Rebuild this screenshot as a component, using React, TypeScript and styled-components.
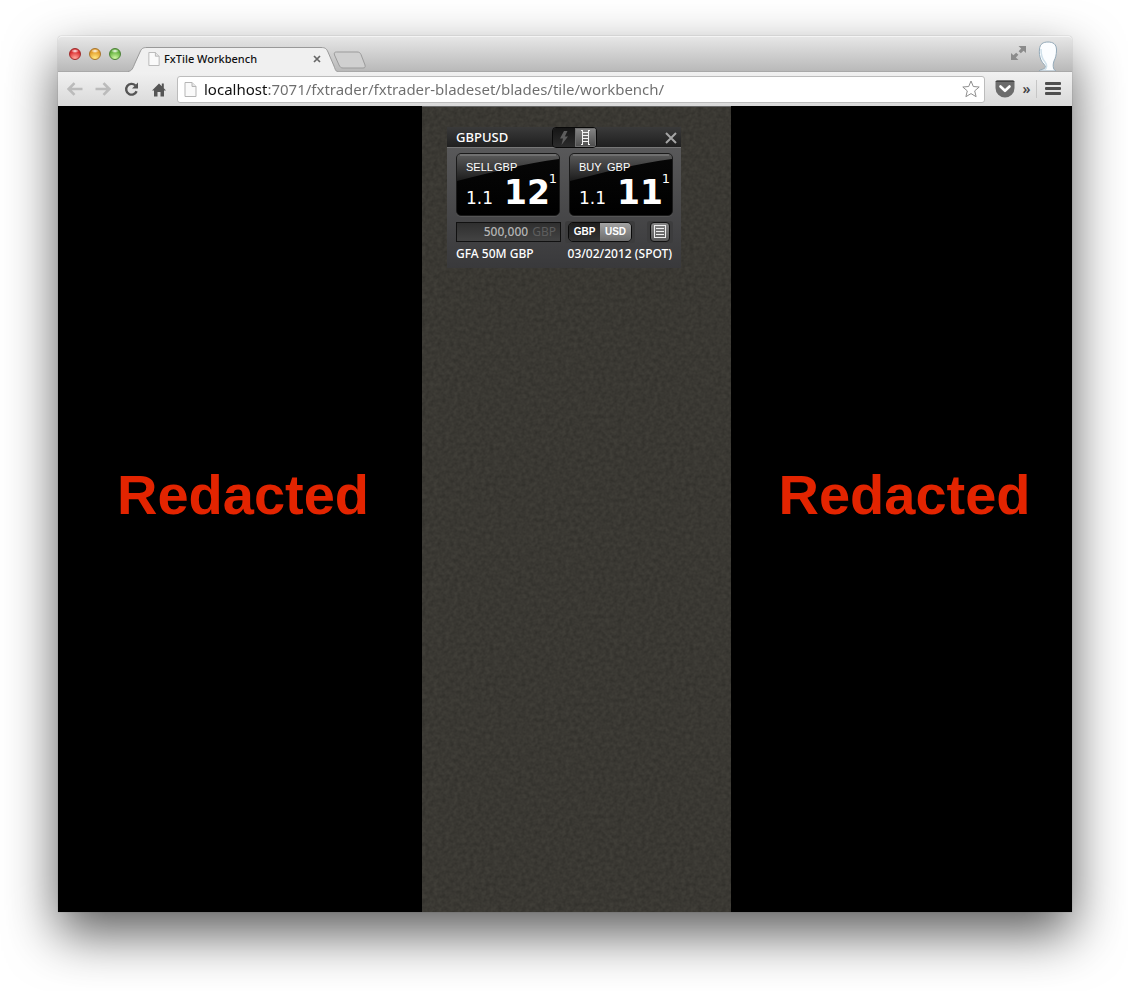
import React, { useState } from "react";
import styled, { createGlobalStyle } from "styled-components";

const uiFont = `"Noto Sans", "Open Sans", sans-serif`;
const wideFont = `"DejaVu Sans", Verdana, sans-serif`;
const plainFont = `"Liberation Sans", Arial, sans-serif`;

const grain =
  "<svg xmlns='http://www.w3.org/2000/svg' width='200' height='200'><filter id='n' x='0' y='0' width='100%' height='100%'><feTurbulence type='fractalNoise' baseFrequency='0.25' numOctaves='3' stitchTiles='stitch'/><feColorMatrix values='0 0 0 0 0 0 0 0 0 0 0 0 0 0 0 0.35 0 0 0 -0.08'/></filter><rect width='200' height='200' filter='url(#n)'/></svg>";

const GlobalStyle = createGlobalStyle`
  *, *::before, *::after { box-sizing: border-box; }
  body { margin: 0; background: #fff; font-family: ${uiFont}; }
  button, input { font: inherit; margin: 0; padding: 0; border: 0; background: none; color: inherit; }
  button { cursor: pointer; }
  svg { display: block; }
`;

const Desktop = styled.div`
  min-height: 100vh;
  padding: 36px 56px 79px 58px;
  display: flex;
  overflow: hidden;
`;

const Window = styled.div`
  flex: 1;
  min-width: 0;
  display: flex;
  flex-direction: column;
  border-radius: 4px 4px 0 0;
  box-shadow: 0 22px 52px rgba(0, 0, 0, 0.64), 0 0 1px rgba(0, 0, 0, 0.5);
`;

const TabStrip = styled.header`
  height: 36px;
  display: flex;
  align-items: flex-end;
  border-radius: 4px 4px 0 0;
  border-top: 1px solid #f4f4f4;
  border-bottom: 1px solid #a9a9a9;
  background: linear-gradient(#e6e6e6, #b9b9b9);
`;

const Lights = styled.div`
  display: flex;
  gap: 8px;
  padding: 0 4px 11px 11px;
`;

const Light = styled.button<{ $top: string; $low: string; $edge: string }>`
  width: 12px;
  height: 12px;
  border-radius: 50%;
  border: 1px solid ${(p) => p.$edge};
  background: radial-gradient(ellipse 4px 2px at 50% 20%, #fff, transparent),
    radial-gradient(circle at 50% 95%, ${(p) => p.$low} 10%, ${(p) => p.$top} 70%);
`;

const Tab = styled.div`
  position: relative;
  width: 213px;
  height: 25px;
  margin-bottom: -1px;
  padding: 0 17px 1px 23px;
  display: flex;
  align-items: center;
  color: #111;
`;

const TabShape = styled.svg`
  position: absolute;
  inset: 0;
`;

const TabTitle = styled.span`
  position: relative;
  flex: 1;
  padding-left: 4px;
  font-size: 11px;
  font-weight: 500;
  line-height: 16px;
  white-space: nowrap;
`;

const TabPart = styled.span`
  position: relative;
`;

const IconButton = styled.button`
  position: relative;
  flex: none;
  display: flex;
  align-items: center;
  justify-content: center;
`;

const NewTab = styled(IconButton)`
  margin: 0 0 2px -5px;
`;

const StripEnd = styled.div`
  margin-left: auto;
  padding-right: 14px;
  display: flex;
  align-items: flex-end;
  gap: 12px;
`;

const FullScreen = styled(IconButton)`
  padding-bottom: 11px;
`;

const Toolbar = styled.nav`
  height: 34px;
  display: flex;
  align-items: center;
  padding: 0 11px 0 8px;
  background: linear-gradient(#f1f1f1, #d9d9d9);
`;

const NavGroup = styled.div`
  display: flex;
  gap: 10px;
  width: 111px;
`;

const NavButton = styled(IconButton)`
  width: 18px;
  height: 18px;
`;

const AddressBar = styled.div`
  flex: 1;
  height: 27px;
  display: flex;
  align-items: center;
  gap: 7px;
  padding: 0 4px 0 6px;
  background: #fff;
  border: 1px solid #bcbcbc;
  border-radius: 3px;
`;

/* The host part is drawn darker than the path. */
const AddressInput = styled.input`
  flex: 1;
  min-width: 0;
  height: 22px;
  outline: none;
  font-size: 15px;
  color: #6d6d6d;
  background: linear-gradient(90deg, #111 63px, #6d6d6d 63px);
  -webkit-background-clip: text;
  background-clip: text;
  -webkit-text-fill-color: transparent;
`;

const ToolEnd = styled.div`
  display: flex;
  align-items: center;
  padding-left: 10px;
`;

const More = styled(IconButton)`
  width: 20px;
  height: 18px;
  margin-left: 2px;
  padding-bottom: 2px;
  font-size: 14px;
  font-weight: 600;
  color: #444;
  border-right: 1px solid #c6c6c6;
`;

const Menu = styled(IconButton)`
  padding-left: 8px;
`;

const Page = styled.main`
  flex: 1;
  display: grid;
  grid-template-columns: minmax(0, 364fr) 309px minmax(0, 341fr);
`;

const Redacted = styled.div`
  display: flex;
  align-items: center;
  justify-content: center;
  padding: 0 0 28px 6px;
  background: #000;
  color: #e32400;
  font: bold 56px/64px ${plainFont};
`;

const Board = styled.section`
  padding: 20px 50px 0 25px;
  border-top: 1px solid #666;
  background: #403e38 url("data:image/svg+xml,${encodeURIComponent(grain).replace(/'/g, "%27").replace(/\(/g, "%28").replace(/\)/g, "%29")}");
`;

const Tile = styled.article`
  width: 100%;
  color: #fff;
  background: linear-gradient(#5e5e5f, #39393b);
`;

const TileHead = styled.div`
  height: 21px;
  display: grid;
  grid-template-columns: 96px 45px 1fr;
  align-items: center;
  padding: 0 4px 0 9px;
  border-bottom: 1px solid #777;
  background: linear-gradient(#3a3a3a, #1f1f1f);
`;

const Pair = styled.h1`
  margin: 0;
  padding-bottom: 2px;
  font-size: 13px;
  line-height: 18px;
  font-weight: 500;
`;

const ModeToggle = styled.div`
  display: flex;
  height: 21px;
  border: 1px solid #080808;
  border-radius: 4px;
  overflow: hidden;
`;

const ModeButton = styled(IconButton)<{ $on?: boolean }>`
  flex: 1;
  background: ${(p) => (p.$on ? "linear-gradient(#868686, #4c4c4c)" : "linear-gradient(#151515, #2c2c2c)")};
  box-shadow: ${(p) => (p.$on ? "inset 0 0 0 1px #6e6e6e" : "none")};
`;

const CloseTile = styled(IconButton)`
  justify-self: end;
`;

const TileBody = styled.div`
  padding: 5px 8px 4px 9px;
`;

const Quotes = styled.div`
  display: grid;
  grid-template-columns: 1fr 1fr;
  gap: 9px;
`;

const QuoteButton = styled.button`
  position: relative;
  height: 63px;
  overflow: hidden;
  border: 1px solid #1a1a1a;
  border-radius: 5px;
  background: linear-gradient(#070707, #000);
  text-align: left;
  display: flex;
  flex-direction: column;
  box-shadow: 0 1px 0 #555;
`;

const Gloss = styled.svg`
  position: absolute;
  top: 0;
  left: 0;
  width: 100%;
  height: 29px;
`;

const QuoteLabels = styled.span`
  position: relative;
  display: grid;
  grid-template-columns: 28px 1fr;
  padding: 7px 0 0 9px;
  font: 11px/12px ${plainFont};
`;

const Price = styled.span`
  position: relative;
  display: flex;
  align-items: baseline;
  width: 100%;
  padding-left: 9px;
  font-family: ${wideFont};
  height: 40px;
  line-height: 40px;
`;

const BigFigure = styled.span`
  width: 38px;
  font-size: 17px;
`;

const Pips = styled.strong`
  font-size: 33px;
`;

const Fraction = styled.sup`
  position: absolute;
  right: 2px;
  top: -1px;
  font-size: 13px;
  line-height: 13px;
`;

const Controls = styled.div`
  display: flex;
  align-items: center;
  gap: 4px;
  margin-top: 5px;
`;

const Amount = styled.label`
  width: 105px;
  height: 20px;
  display: flex;
  align-items: center;
  gap: 4px;
  padding: 0 4px 0 9px;
  font-size: 12px;
  line-height: 16px;
  color: #5d5d5d;
  border: 1px solid #111;
  background: linear-gradient(#2f2f2f, #434343);
`;

const AmountInput = styled.input`
  flex: 1;
  min-width: 0;
  text-align: right;
  font-weight: 500;
  color: #b4b4b4;
  outline: none;
`;

const Recess = styled.div`
  padding: 1px 3px;
  border-radius: 3px;
  background: #3c3c3d;

  &:last-child {
    margin-left: auto;
  }
`;

const CurrencyToggle = styled.div`
  display: flex;
  width: 64px;
  height: 20px;
  border: 1px solid #0a0a0a;
  border-radius: 5px;
  overflow: hidden;
`;

const CurrencyButton = styled.button<{ $on: boolean }>`
  flex: 1;
  font: bold 10px/18px ${plainFont};
  color: #fff;
  background: ${(p) => (p.$on ? "linear-gradient(#a2a2a2, #6d6d6d)" : "linear-gradient(#1e1e1e, #333)")};
`;

const TicketButton = styled(IconButton)`
  width: 20px;
  height: 20px;
  border: 1px solid #111;
  border-radius: 4px;
  background: linear-gradient(#858585, #595959);
`;

const TileFoot = styled.div`
  display: flex;
  justify-content: space-between;
  font-size: 12px;
  line-height: 16px;
  padding: 3px 1px 2px 0;
  font-weight: 500;
  white-space: nowrap;
`;

const PageIcon = ({ size }: { size: number }) => (
  <svg width={size - 2} height={size} viewBox="0 0 12 15" aria-hidden="true">
    <path d="M.5.5h7l4 4v10H.5z" fill="#fafafa" stroke="#b5b5b5" />
    <path d="M7.5.5v4h4" fill="#e6e6e6" stroke="#b5b5b5" />
  </svg>
);

const Arrow = ({ forward }: { forward?: boolean }) => (
  <svg width="16" height="14" viewBox="0 0 16 14" aria-hidden="true">
    <path
      d={forward ? "M0.5 7H14M8.5 1.2 14.3 7 8.5 12.8" : "M15.5 7H2M7.5 1.2 1.7 7 7.5 12.8"}
      fill="none"
      stroke="#bbb"
      strokeWidth="2.6"
    />
  </svg>
);

type QuoteProps = { id: string; side: string; currency: string; base: string; pips: string; fraction: string };

const Quote = ({ id, side, currency, base, pips, fraction }: QuoteProps) => (
  <QuoteButton type="button">
    <Gloss viewBox="0 0 103 29" preserveAspectRatio="none" aria-hidden="true">
      <defs>
        <linearGradient id={id} x1="0" y1="0" x2="0" y2="1">
          <stop offset="0" stopColor="#5b5b5b" />
          <stop offset="1" stopColor="#1c1c1c" />
        </linearGradient>
      </defs>
      <path d="M0 0H103V5C70 9 32 19 0 27Z" fill={`url(#${id})`} />
      <path d="M3 1H100" stroke="#888" fill="none" />
    </Gloss>
    <QuoteLabels>
      <span>{side}</span>
      <span>{currency}</span>
    </QuoteLabels>
    <Price>
      <BigFigure>{base}</BigFigure>
      <Pips>{pips}</Pips>
      <Fraction>{fraction}</Fraction>
    </Price>
  </QuoteButton>
);

export default function App() {
  const [currency, setCurrency] = useState("USD");
  return (
    <>
      <GlobalStyle />
      <Desktop>
        <Window>
          <TabStrip>
            <Lights>
              <Light aria-label="Close window" $top="#d8282b" $low="#ff9c92" $edge="#a02a2a" />
              <Light aria-label="Minimise" $top="#e29a26" $low="#ffe27a" $edge="#a9752a" />
              <Light aria-label="Zoom" $top="#5fae3a" $low="#c6f29a" $edge="#4b8136" />
            </Lights>
            <Tab>
              <TabShape width="213" height="25" viewBox="0 0 213 25" aria-hidden="true">
                <path
                  d="M3 24.5C7 24 8 21 10 16L15 5C16.500 1.500 18 .5 22 .5H196C200 .5 201.500 1.500 203 5L209 19C210.500 23.500 211 24.500 213 24.500V25H3Z"
                  fill="#f0f0f0"
                />
                <path
                  d="M3 24.5C7 24 8 21 10 16L15 5C16.500 1.500 18 .5 22 .5H196C200 .5 201.500 1.500 203 5L209 19C210.500 23.500 211 24.500 213 24.500"
                  fill="none"
                  stroke="#999"
                />
              </TabShape>
              <TabPart>
                <PageIcon size={14} />
              </TabPart>
              <TabTitle>FxTile Workbench</TabTitle>
              <IconButton aria-label="Close tab">
                <svg width="8" height="8" viewBox="0 0 8 8">
                  <path d="M1 1l6 6M7 1 1 7" stroke="#666" strokeWidth="1.700" />
                </svg>
              </IconButton>
            </Tab>
            <NewTab aria-label="New tab">
              <svg width="33" height="18" viewBox="0 0 33 18">
                <path
                  d="M3.500 1H24C26 1 27 1.500 28 3.500L32 14C32.500 16 32 17 30 17H10C8 17 7 16 6 14L1.500 4C.8 2 1.500 1 3.500 1Z"
                  fill="#d0d0d0"
                  stroke="#9b9b9b"
                />
              </svg>
            </NewTab>
            <StripEnd>
              <FullScreen aria-label="Full screen">
                <svg width="15" height="14" viewBox="0 0 15 14" fill="#8b8b8b">
                  <path d="M7.500 0H15V7L12.600 4.800 9.800 7.200 7.600 5.200 10.200 2.500Z" />
                  <path d="M7.500 14H0V7L2.400 9.200 5.200 6.800 7.400 8.800 4.800 11.500Z" />
                </svg>
              </FullScreen>
              <IconButton aria-label="Profile">
                <svg width="20" height="30" viewBox="0 0 20 30">
                  <path
                    d="M1 30C2 28 7 29 7.500 26C7.500 24 4.500 22.500 3 19C1.500 15 1 12 1.500 8C2 3 5 1 10 1C15 1 18.500 3 18.500 9C18.500 14 17.500 17 16 20C15 23 15 25 15.500 27C16 29 17 29 18 30Z"
                    fill="#fbfdff"
                    stroke="#93a9b8"
                  />
                  <path d="M3 8C3 14 4 18 7 21C9.500 24 9 27 6.500 29" fill="none" stroke="#cfe0ea" strokeWidth="1.500" />
                </svg>
              </IconButton>
            </StripEnd>
          </TabStrip>
          <Toolbar aria-label="Browser">
            <NavGroup>
              <NavButton aria-label="Back">
                <Arrow />
              </NavButton>
              <NavButton aria-label="Forward">
                <Arrow forward />
              </NavButton>
              <NavButton aria-label="Reload">
                <svg width="15" height="15" viewBox="0 0 15 15">
                  <path d="M12.600 9.300A5.400 5.400 0 1 1 11.300 3.300" fill="none" stroke="#555" strokeWidth="2.400" />
                  <path d="M14 0.500V6.500H8Z" fill="#555" />
                </svg>
              </NavButton>
              <NavButton aria-label="Home">
                <svg width="14" height="15" viewBox="0 0 14 15" fill="#555">
                  <path d="M7 1.500 0 8.500H2V14.500H5.500V10H8.500V14.500H12V8.500H14L11.800 6.200V1.500H9.800V4.200Z" />
                </svg>
              </NavButton>
            </NavGroup>
            <AddressBar>
              <PageIcon size={15} />
              <AddressInput
                aria-label="Address"
                defaultValue="localhost:7071/fxtrader/fxtrader-bladeset/blades/tile/workbench/"
              />
              <IconButton aria-label="Bookmark">
                <svg width="18" height="18" viewBox="0 0 18 18">
                  <path
                    d="M9 1 11.300 6.500 17.200 7 12.700 10.900 14.100 16.700 9 13.600 3.900 16.700 5.300 10.900 .8 7 6.700 6.500Z"
                    fill="#fff"
                    stroke="#8e8e8e"
                  />
                </svg>
              </IconButton>
            </AddressBar>
            <ToolEnd>
              <IconButton aria-label="Pocket">
                <svg width="20" height="18" viewBox="0 0 20 18">
                  <path d="M2 .5H18Q19.500 .5 19.500 2V8A9.500 9.500 0 0 1 .5 8V2Q.5 .5 2 .5Z" fill="#6c6c6c" />
                  <path d="M.5 2Q.5 .5 2 .5H18Q19.500 .5 19.500 2Z" fill="#444" />
                  <path d="M5.500 6.500 10 10.800 14.500 6.500" fill="none" stroke="#fff" strokeWidth="2.600" strokeLinecap="round" strokeLinejoin="round" />
                </svg>
              </IconButton>
              <More aria-label="More extensions">»</More>
              <Menu aria-label="Menu">
                <svg width="16" height="14" viewBox="0 0 16 14" fill="#4f4f4f">
                  <rect y="0" width="16" height="3" rx="1" />
                  <rect y="5" width="16" height="3" rx="1" />
                  <rect y="10" width="16" height="3" rx="1" />
                </svg>
              </Menu>
            </ToolEnd>
          </Toolbar>
          <Page>
            <Redacted>Redacted</Redacted>
            <Board>
              <Tile>
                <TileHead>
                  <Pair>GBPUSD</Pair>
                  <ModeToggle>
                    <ModeButton aria-label="Quick trade">
                      <svg width="10" height="14" viewBox="0 0 10 14">
                        <path d="M5 0 1 7.500H4L2.500 14 9 5.500H5.800L8.500 0Z" fill="#5c5c5c" />
                      </svg>
                    </ModeButton>
                    <ModeButton $on aria-label="Ladder">
                      <svg width="11" height="15" viewBox="0 0 11 15">
                        <path d="M2.500 0V15M8.500 0V15M2 2.500H9M2 5.500H9M2 8.500H9M2 11.500H9M1 14.500H3M8 14.500H10M1 .5H3M8 .5H10" stroke="#f4f4f4" fill="none" />
                      </svg>
                    </ModeButton>
                  </ModeToggle>
                  <CloseTile aria-label="Close tile">
                    <svg width="12" height="12" viewBox="0 0 12 12">
                      <path d="M1 1l10 10M11 1 1 11" stroke="#a5a5a5" strokeWidth="2" />
                    </svg>
                  </CloseTile>
                </TileHead>
                <TileBody>
                  <Quotes>
                    <Quote id="gloss-sell" side="SELL" currency="GBP" base="1.1" pips="12" fraction="1" />
                    <Quote id="gloss-buy" side="BUY" currency="GBP" base="1.1" pips="11" fraction="1" />
                  </Quotes>
                  <Controls>
                    <Amount>
                      <AmountInput aria-label="Amount" defaultValue="500,000" />
                      GBP
                    </Amount>
                    <Recess>
                      <CurrencyToggle>
                        {["GBP", "USD"].map((c) => (
                          <CurrencyButton
                            key={c}
                            type="button"
                            $on={c === currency}
                            aria-pressed={c === currency}
                            onClick={() => setCurrency(c)}
                          >
                            {c}
                          </CurrencyButton>
                        ))}
                      </CurrencyToggle>
                    </Recess>
                    <Recess>
                      <TicketButton aria-label="Open ticket">
                        <svg width="14" height="14" viewBox="0 0 14 14">
                          <path d="M1.500 0V12.500M12.500 0V12.500M1 .5H13M3 3.500H11M3 6.500H11M3 9.500H11M1 12.500H13" stroke="#eee" fill="none" />
                        </svg>
                      </TicketButton>
                    </Recess>
                  </Controls>
                  <TileFoot>
                    <span>GFA 50M GBP</span>
                    <span>03/02/2012 (SPOT)</span>
                  </TileFoot>
                </TileBody>
              </Tile>
            </Board>
            <Redacted>Redacted</Redacted>
          </Page>
        </Window>
      </Desktop>
    </>
  );
}
